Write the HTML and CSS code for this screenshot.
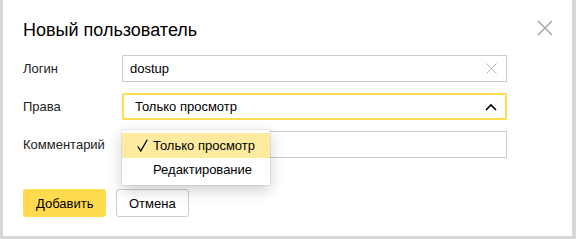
FILE: index.html
```html
<!DOCTYPE html>
<html lang="ru">
<head>
  <meta charset="UTF-8">
  <meta name="viewport" content="width=device-width, initial-scale=1.0">
  <title>Новый пользователь</title>

  <link rel="stylesheet" href="styles.css">
</head>
<body>
  <div class="dialog">
    <div class="dialog-head">
      <h1 class="dialog-title">Новый пользователь</h1>
      <button class="dialog-close" type="button" aria-label="Закрыть">
        <svg width="16" height="16" viewBox="0 0 16 16">
          <path d="M1 1 L15 15 M15 1 L1 15" stroke="#aaa" stroke-width="1.6" fill="none"/>
        </svg>
      </button>
    </div>

    <div class="form">
      <div class="row">
        <label class="label">Логин</label>
        <div class="input">
          <span class="input-text">dostup</span>
          <svg class="input-clear" width="11" height="11" viewBox="0 0 11 11">
            <path d="M0.5 0.5 L10.5 10.5 M10.5 0.5 L0.5 10.5" stroke="#b3b3b3" stroke-width="1" fill="none"/>
          </svg>
        </div>
      </div>

      <div class="row">
        <label class="label">Права</label>
        <div class="select-wrap">
          <div class="select">
            <span class="select-text">Только просмотр</span>
            <svg class="select-arrow" width="12" height="8" viewBox="0 0 12 8">
              <path d="M1 7 L6 2 L11 7" stroke="#000" stroke-width="1.6" fill="none"/>
            </svg>
          </div>
          <ul class="menu">
            <li class="menu-item menu-item_checked">
              <svg class="check" width="11" height="13" viewBox="0 0 11 13">
                <path d="M0.8 7.5 L3.8 12 L10.2 0.8" stroke="#000" stroke-width="1.3" fill="none"/>
              </svg>Только просмотр</li>
            <li class="menu-item">Редактирование</li>
          </ul>
        </div>
      </div>

      <div class="row">
        <label class="label">Комментарий</label>
        <div class="input"></div>
      </div>
    </div>

    <div class="actions">
      <button class="btn btn_action" type="button">Добавить</button>
      <button class="btn" type="button">Отмена</button>
    </div>
  </div>
</body>
</html>
```

FILE: styles.css
```css
body {
  margin: 0;
  background-color: #d7d7d7;
  font-family: "Liberation Sans", Arial, sans-serif;
  color: #000;
}

.dialog {
  box-sizing: border-box;
  width: 569px;
  height: 236px;
  margin-left: 3px;
  padding: 18px 20px 0 20px;
  background-color: #fff;
}

/* шапка */
.dialog-head {
  display: flex;
  justify-content: space-between;
  align-items: flex-start;
}
.dialog-title {
  margin: 0;
  font-size: 18px;
  font-weight: normal;
  line-height: 24px;
}
.dialog-close {
  margin: 2px -1px 0 0;
  padding: 0;
  border: 0;
  background: none;
  line-height: 0;
}

/* форма */
.form {
  display: flex;
  flex-direction: column;
  gap: 11px;
  margin-top: 13px;
}
.row {
  display: flex;
  align-items: center;
}
.label {
  width: 99px;
  font-size: 13px;
  color: #222;
}
.input,
.select {
  box-sizing: border-box;
  display: flex;
  align-items: center;
  width: 385px;
  height: 27px;
  border: 1px solid #ccc;
  font-size: 13px;
}
.input-text {
  flex: 1;
  padding-left: 7px;
}
.input-clear {
  margin-right: 9px;
}

.select-wrap {
  position: relative;
}
.select {
  justify-content: space-between;
  border: 2px solid #ffdb4d;
  border-radius: 2px;
}
.select-text {
  padding-left: 11px;
}
.select-arrow {
  margin-right: 8px;
}

/* выпадающее меню */
.menu {
  position: absolute;
  top: 37px;
  left: 0;
  width: 148px;
  margin: 0;
  padding: 3px 0;
  list-style: none;
  background-color: #fff;
  box-shadow: 0 0 0 1px rgba(0, 0, 0, .06), 0 5px 14px rgba(0, 0, 0, .2);
  font-size: 13px;
}
.menu-item {
  height: 24px;
  line-height: 24px;
  padding-left: 31px;
  position: relative;
}
.menu-item_checked {
  height: 25px;
  line-height: 25px;
  background-color: #ffeba0;
}
.check {
  position: absolute;
  left: 15px;
  top: 6px;
}

/* кнопки */
.actions {
  display: flex;
  gap: 10px;
  margin-top: 31px;
}
.btn {
  box-sizing: border-box;
  height: 28px;
  padding: 0 12px;
  border: 1px solid #ccc;
  border-radius: 3px;
  background-color: #fff;
  font-family: inherit;
  font-size: 13px;
  color: #000;
}
.btn_action {
  width: 83px;
  border-color: #ffdb4d;
  background-color: #ffdb4d;
}
```
